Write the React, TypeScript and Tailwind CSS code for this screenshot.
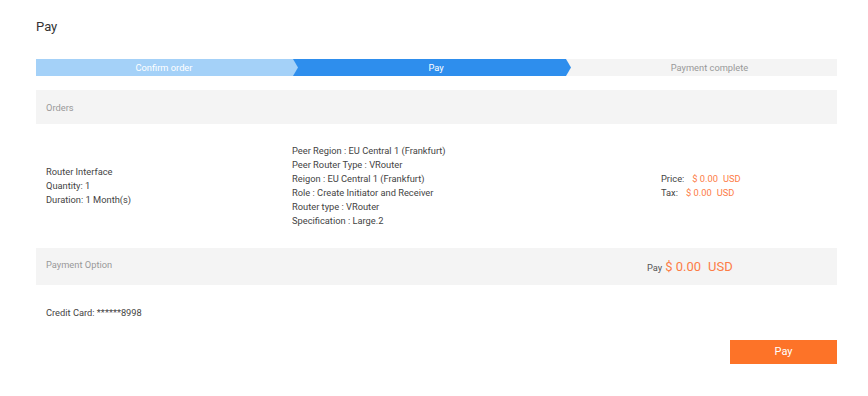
import type { ReactNode } from 'react';

const ORANGE = 'text-[#fd7c46]';

function Step({
  label,
  className,
  arrow,
}: {
  label: string;
  className: string;
  arrow?: boolean;
}) {
  return (
    <div
      className={`relative flex h-[17px] items-center justify-center text-[9.3px] ${className} ${
        arrow ? '[clip-path:polygon(0_0,calc(100%-5px)_0,100%_50%,calc(100%-5px)_100%,0_100%)]' : ''
      }`}
    >
      {label}
    </div>
  );
}

function Band({ children, className = '' }: { children: ReactNode; className?: string }) {
  return <div className={`flex items-center bg-[#f4f4f4] px-[10px] ${className}`}>{children}</div>;
}

export default function App() {
  const details = [
    'Peer Region : EU Central 1 (Frankfurt)',
    'Peer Router Type : VRouter',
    'Reigon : EU Central 1 (Frankfurt)',
    'Role : Create Initiator and Receiver',
    'Router type : VRouter',
    'Specification : Large.2',
  ];

  return (
    <div className="min-h-[396px] bg-white pl-[36px] pr-[31px] pt-[18px] font-['Roboto',sans-serif] text-[#444]">
      <h1 className="text-[13px] leading-[18px] text-[#333]">Pay</h1>

      {/* Steps */}
      <div className="mt-[23px] flex">
        <Step label="Confirm order" arrow className="z-20 w-[262px] shrink-0 bg-[#a4d1f8] pr-[6px] text-white" />
        <Step label="Pay" arrow className="z-10 -ml-[5px] w-[278px] shrink-0 bg-[#2e8eed] pl-[8px] text-white" />
        <Step label="Payment complete" className="-ml-[5px] flex-1 bg-[#f4f4f4] pl-[16px] text-[#999]" />
      </div>

      {/* Orders */}
      <Band className="mt-[14px] h-[34px] pt-[1px] text-[9.3px] text-[#999]">Orders</Band>
      <div className="flex h-[124px] items-center px-[10px] text-[9.3px] leading-[14px]">
        <div className="w-[246px] shrink-0">
          <p>Router Interface</p>
          <p>Quantity: 1</p>
          <p>Duration: 1 Month(s)</p>
        </div>
        <div className="w-[369px] shrink-0">
          {details.map((d) => (
            <p key={d}>{d}</p>
          ))}
        </div>
        <div>
          <p>
            Price:<span className={`ml-[8px] ${ORANGE}`}>$ 0.00</span>
            <span className={`ml-[5px] ${ORANGE}`}>USD</span>
          </p>
          <p>
            Tax:<span className={`ml-[8px] ${ORANGE}`}>$ 0.00</span>
            <span className={`ml-[5px] ${ORANGE}`}>USD</span>
          </p>
        </div>
      </div>

      {/* Payment option */}
      <Band className="h-[37px] text-[9.3px] text-[#999]">
        <span className="-mt-[3px] w-[601px] shrink-0">Payment Option</span>
        <span className="flex items-baseline gap-[3px]">
          <span className="text-[9.3px] text-[#555]">Pay</span>
          <span className={`text-[13px] ${ORANGE}`}>$ 0.00</span>
          <span className={`ml-[4px] text-[13px] ${ORANGE}`}>USD</span>
        </span>
      </Band>
      <p className="px-[10px] pt-[21px] text-[9.3px] leading-[14px]">Credit Card: ******8998</p>

      <div className="mt-[20px] flex justify-end">
        <button className="h-[24px] w-[107px] bg-[#fd7328] text-[11px] text-white">Pay</button>
      </div>
    </div>
  );
}
